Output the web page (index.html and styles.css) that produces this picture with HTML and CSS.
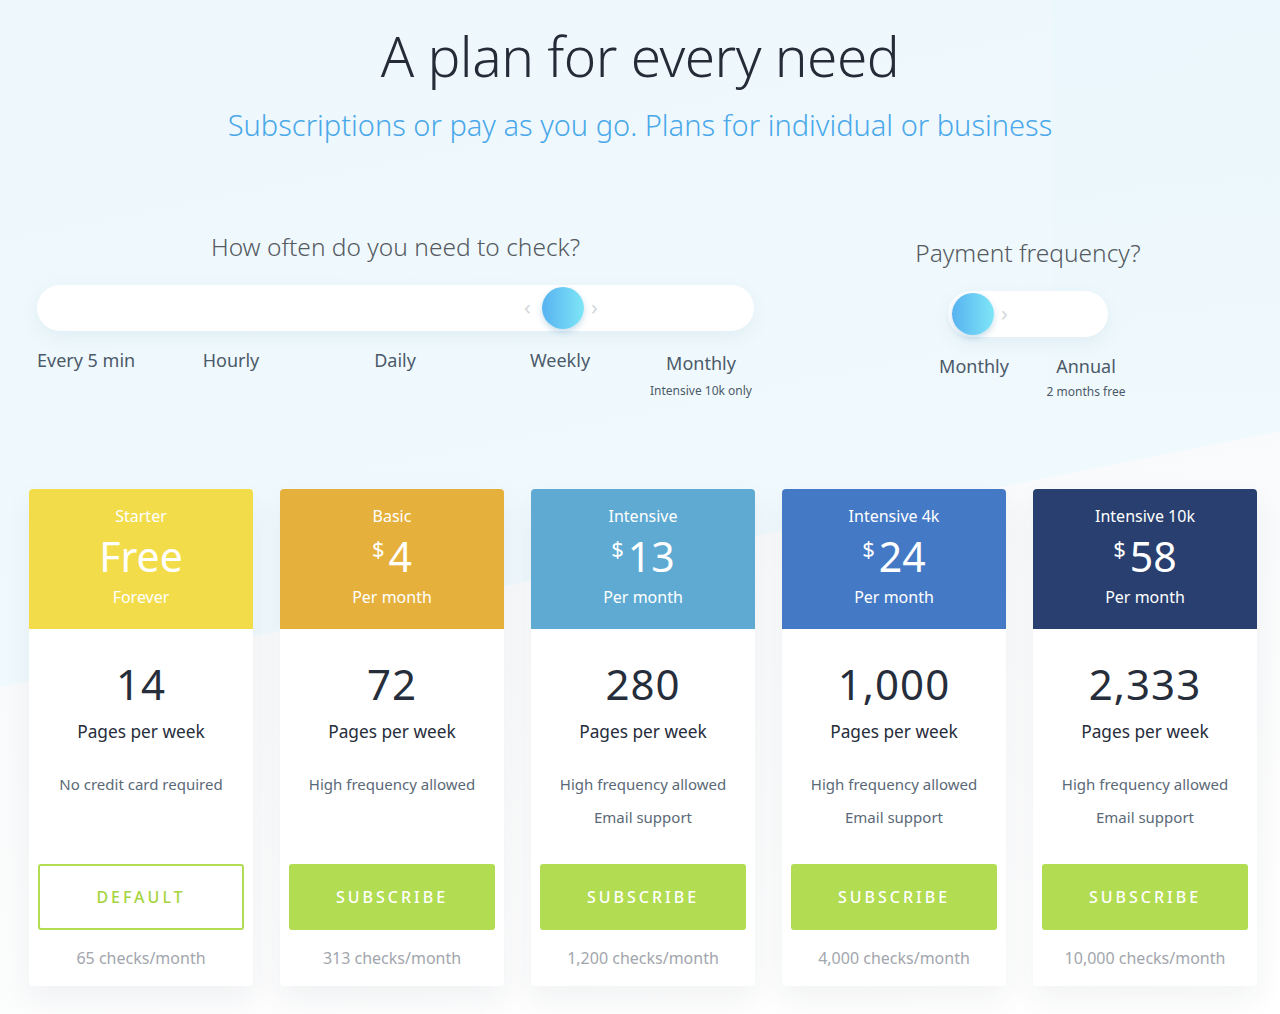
FILE: index.html
```
<!DOCTYPE html>
<html>
	<head>
		<meta charset="UTF-8">
		<title>Pricing</title>
		<link rel="stylesheet" href="styles.css">
	</head>

	<body>
		<div class="head">
			<h1 class="title">A plan for every need</h1>
			<p class="subtitle">Subscriptions or pay as you go. Plans for individual or business</p>
		</div>

		<div class="controls">
			<div class="often">
				<div class="question">How often do you need to check?</div>
				<div class="track">
					<span class="arrow left">‹</span>
					<span class="knob" style="left: 505px;"></span>
					<span class="arrow right">›</span>
				</div>
				<div class="steps">
					<div class="step first">Every 5 min</div>
					<div class="step">Hourly</div>
					<div class="step">Daily</div>
					<div class="step">Weekly</div>
					<div class="step last">Monthly<small>Intensive 10k only</small></div>
				</div>
			</div>

			<div class="payment">
				<div class="question">Payment frequency?</div>
				<div class="toggle">
					<span class="knob"></span>
					<span class="arrow">›</span>
				</div>
				<div class="periods">
					<div class="period">Monthly</div>
					<div class="period">Annual<small>2 months free</small></div>
				</div>
			</div>
		</div>

		<div class="plans">
			<div class="plan">
				<div class="top starter">
					<div class="name">Starter</div>
					<div class="price">Free</div>
					<div class="per">Forever</div>
				</div>
				<div class="body">
					<div class="pages">14</div>
					<div class="unit">Pages per week</div>
					<div class="feature">No credit card required</div>
					<a class="btn default">DEFAULT</a>
					<div class="checks">65 checks/month</div>
				</div>
			</div>

			<div class="plan">
				<div class="top basic">
					<div class="name">Basic</div>
					<div class="price"><sup>$</sup>4</div>
					<div class="per">Per month</div>
				</div>
				<div class="body">
					<div class="pages">72</div>
					<div class="unit">Pages per week</div>
					<div class="feature">High frequency allowed</div>
					<a class="btn">SUBSCRIBE</a>
					<div class="checks">313 checks/month</div>
				</div>
			</div>

			<div class="plan">
				<div class="top intensive">
					<div class="name">Intensive</div>
					<div class="price"><sup>$</sup>13</div>
					<div class="per">Per month</div>
				</div>
				<div class="body">
					<div class="pages">280</div>
					<div class="unit">Pages per week</div>
					<div class="feature">High frequency allowed</div>
					<div class="feature">Email support</div>
					<a class="btn">SUBSCRIBE</a>
					<div class="checks">1,200 checks/month</div>
				</div>
			</div>

			<div class="plan">
				<div class="top intensive4k">
					<div class="name">Intensive 4k</div>
					<div class="price"><sup>$</sup>24</div>
					<div class="per">Per month</div>
				</div>
				<div class="body">
					<div class="pages">1,000</div>
					<div class="unit">Pages per week</div>
					<div class="feature">High frequency allowed</div>
					<div class="feature">Email support</div>
					<a class="btn">SUBSCRIBE</a>
					<div class="checks">4,000 checks/month</div>
				</div>
			</div>

			<div class="plan">
				<div class="top intensive10k">
					<div class="name">Intensive 10k</div>
					<div class="price"><sup>$</sup>58</div>
					<div class="per">Per month</div>
				</div>
				<div class="body">
					<div class="pages">2,333</div>
					<div class="unit">Pages per week</div>
					<div class="feature">High frequency allowed</div>
					<div class="feature">Email support</div>
					<a class="btn">SUBSCRIBE</a>
					<div class="checks">10,000 checks/month</div>
				</div>
			</div>
		</div>
	</body>
</html>
```

FILE: styles.css
```
html {
	height: 100%;
}

body {
	margin: 0;
	min-height: 100%;
	font-family: "Noto Sans", "Open Sans", sans-serif;
	color: #2a2f3d;
	background:
		linear-gradient(to bottom, rgba(226, 244, 251, 0.35), rgba(226, 244, 251, 0) 420px) right top / 228px 420px no-repeat,
		linear-gradient(168.7deg, #eef8fc 0, #f0f9fd 673px, #f9fafb 674px, #ffffff 100%);
}

.head {
	text-align: center;
	padding-top: 21px;
}

.title {
	margin: 0;
	font-size: 55px;
	font-weight: 300;
	line-height: 70px;
	letter-spacing: -0.5px;
	color: #262b38;
}

.subtitle {
	margin: 14px 0 0;
	font-size: 29px;
	font-weight: 300;
	line-height: 40px;
	color: #4aa8ea;
}

/* controls */

.controls {
	display: flex;
	align-items: flex-start;
	padding: 86px 0 0 37px;
}

.question {
	font-size: 24.5px;
	font-weight: 300;
	color: #555a61;
	text-align: center;
	line-height: 32px;
}

.often {
	width: 717px;
}

.track {
	position: relative;
	height: 46px;
	margin-top: 22px;
	border-radius: 23px;
	background: #fff;
	box-shadow: 0 6px 18px rgba(60, 110, 140, 0.08);
}

.knob {
	position: absolute;
	top: 2px;
	width: 42px;
	height: 42px;
	border-radius: 50%;
	background: linear-gradient(to right, #58b2f0, #7ee6f7);
	box-shadow: 0 3px 6px rgba(40, 120, 170, 0.25);
}

.arrow {
	position: absolute;
	top: 9px;
	font-size: 22px;
	line-height: 24px;
	color: #d4d8dc;
}

.track .left {
	left: 487px;
}

.track .right {
	left: 554px;
}

.steps {
	display: grid;
	grid-template-columns: 120px 148px 180px 150px 132px;
	margin-top: 17px;
	font-size: 18px;
	color: #4b5a69;
}

.step {
	text-align: center;
	line-height: 24px;
}

.step.first {
	text-align: left;
}

.step.last {
	padding-top: 3px;
}

small {
	display: block;
	margin-top: 7px;
	font-size: 12px;
	line-height: 18px;
	color: #4b5a69;
}

.payment {
	width: 240px;
	margin-left: 154px;
	padding-top: 6px;
}

.toggle {
	position: relative;
	width: 160px;
	height: 46px;
	margin: 22px 0 0 40px;
	border-radius: 23px;
	background: #fff;
	box-shadow: 0 6px 18px rgba(60, 110, 140, 0.08);
}

.toggle .knob {
	left: 4px;
}

.toggle .arrow {
	left: 53px;
}

.periods {
	display: grid;
	grid-template-columns: 132px 92px;
	margin-top: 17px;
	font-size: 18px;
	line-height: 24px;
	color: #4b5a69;
	text-align: center;
}

.periods small {
	margin-top: 5px;
}

/* plans */

.plans {
	display: flex;
	gap: 27px;
	padding: 88px 0 0 29px;
}

.plan {
	width: 224px;
	height: 497px;
	display: flex;
	flex-direction: column;
	border-radius: 4px;
	overflow: hidden;
	background: #fff;
	box-shadow: 0 12px 30px rgba(30, 50, 70, 0.06);
	text-align: center;
}

.top {
	height: 140px;
	padding-top: 16px;
	box-sizing: border-box;
	color: #fff;
}

.starter { background: #f2dc4a; }
.basic { background: #e6b03c; }
.intensive { background: #5eaad2; }
.intensive4k { background: #4479c6; }
.intensive10k { background: #283f6f; }

.name {
	font-size: 16px;
	line-height: 22px;
}

.price {
	height: 54px;
	font-size: 41px;
	line-height: 54px;
	margin-top: 2px;
}

.price sup {
	position: relative;
	top: -15px;
	font-size: 22px;
	line-height: 0;
	vertical-align: baseline;
	margin-right: 4px;
}

.per {
	font-size: 16px;
	line-height: 22px;
	margin-top: 3px;
}

.body {
	flex: 1;
	display: flex;
	flex-direction: column;
	padding: 30px 9px 18px;
}

.pages {
	font-size: 42px;
	line-height: 50px;
	letter-spacing: 1px;
	color: #262d3b;
}

.unit {
	margin-top: 10px;
	font-size: 17.3px;
	line-height: 26px;
	color: #262d3b;
}

.feature {
	font-size: 15px;
	line-height: 33px;
	color: #5a6977;
}

.unit + .feature {
	margin-top: 23px;
}

.btn {
	display: block;
	box-sizing: border-box;
	margin-top: auto;
	height: 66px;
	line-height: 66px;
	border-radius: 3px;
	background: #b2dc52;
	color: #fff;
	font-size: 16px;
	font-weight: 500;
	letter-spacing: 3px;
}

.btn.default {
	background: #fff;
	border: 2px solid #b2dc52;
	line-height: 62px;
	color: #a5d43e;
}

.checks {
	margin-top: 18px;
	font-size: 16px;
	line-height: 20px;
	color: #a2a6ad;
}
```
